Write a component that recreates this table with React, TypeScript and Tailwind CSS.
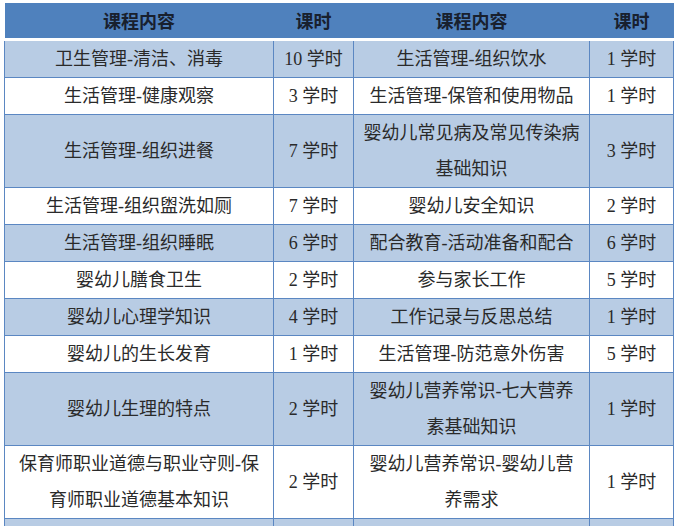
const ROWS: [string[], string, string[], string][] = [
  [['卫生管理-清洁、消毒'], '10 学时', ['生活管理-组织饮水'], '1 学时'],
  [['生活管理-健康观察'], '3 学时', ['生活管理-保管和使用物品'], '1 学时'],
  [['生活管理-组织进餐'], '7 学时', ['婴幼儿常见病及常见传染病', '基础知识'], '3 学时'],
  [['生活管理-组织盥洗如厕'], '7 学时', ['婴幼儿安全知识'], '2 学时'],
  [['生活管理-组织睡眠'], '6 学时', ['配合教育-活动准备和配合'], '6 学时'],
  [['婴幼儿膳食卫生'], '2 学时', ['参与家长工作'], '5 学时'],
  [['婴幼儿心理学知识'], '4 学时', ['工作记录与反思总结'], '1 学时'],
  [['婴幼儿的生长发育'], '1 学时', ['生活管理-防范意外伤害'], '5 学时'],
  [['婴幼儿生理的特点'], '2 学时', ['婴幼儿营养常识-七大营养', '素基础知识'], '1 学时'],
  [['保育师职业道德与职业守则-保', '育师职业道德基本知识'], '2 学时', ['婴幼儿营养常识-婴幼儿营', '养需求'], '1 学时'],
]

function Lines({ lines }: { lines: string[] }) {
  return (
    <>
      {lines.map((l, i) => (
        <span key={i} className="block whitespace-nowrap">{l}</span>
      ))}
    </>
  )
}

export default function App() {
  const cell = 'border border-[#5b87c2] px-1 text-center align-middle leading-[36px] p-0'
  return (
    <div className="bg-white w-[680px] h-[526px] overflow-hidden pt-[3px] pl-[4px]">
      <table
        className="w-[669px] table-fixed border-collapse text-[18px] text-[#2a2a2a]"
        style={{ fontFamily: '"Liberation Serif", "Noto Sans CJK SC", serif' }}
      >
        <colgroup>
          <col className="w-[269px]" />
          <col className="w-[80px]" />
          <col className="w-[236px]" />
          <col className="w-[84px]" />
        </colgroup>
        <thead>
          <tr className="bg-[#4f81bd] text-[#18202e] font-bold text-[18px]" style={{ fontFamily: '"Noto Sans CJK SC", sans-serif' }}>
            {['课程内容', '课时', '课程内容', '课时'].map((h, i) => (
              <th key={i} className="h-[35px] p-0 border-b-[3px] border-b-white leading-[35px] font-bold">
                {h}
              </th>
            ))}
          </tr>
        </thead>
        <tbody>
          {ROWS.map(([a, b, c, d], i) => (
            <tr key={i} className={i % 2 === 0 ? 'bg-[#b8cce4]' : 'bg-white'}>
              <td className={cell}><Lines lines={a} /></td>
              <td className={cell}>{b}</td>
              <td className={cell}><Lines lines={c} /></td>
              <td className={cell}>{d}</td>
            </tr>
          ))}
          <tr className="bg-[#b8cce4]">
            <td className={cell}>&nbsp;</td>
            <td className={cell}>&nbsp;</td>
            <td className={cell}>&nbsp;</td>
            <td className={cell}>&nbsp;</td>
          </tr>
        </tbody>
      </table>
    </div>
  )
}
